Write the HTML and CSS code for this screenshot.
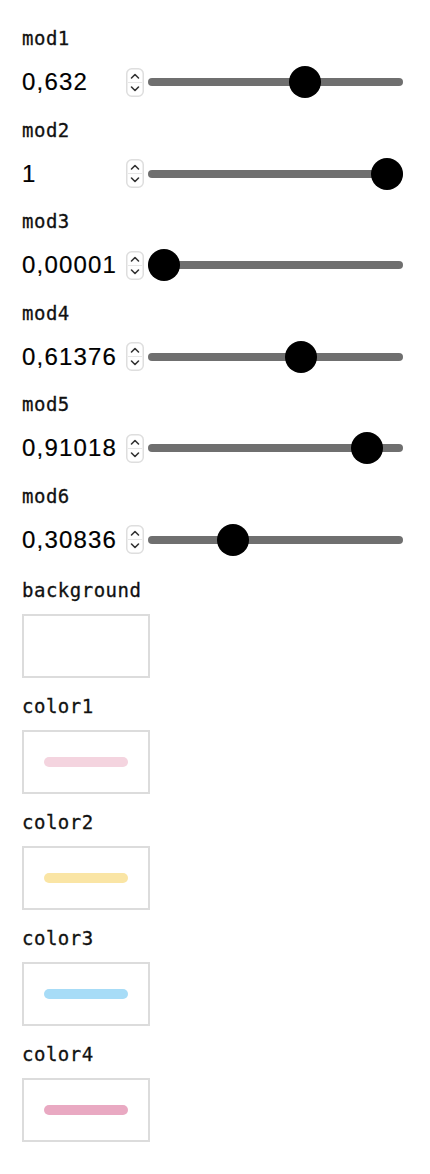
FILE: index.html
```html
<!DOCTYPE html>
<html>
<head>
<meta charset="utf-8">
<link rel="stylesheet" href="styles.css">
</head>
<body>
<div class="panel">
  <div class="sliders">
    <div class="group">
      <label class="lbl">mod1</label>
      <div class="row">
        <div class="num"><span class="val">0,632</span><svg class="spin" viewBox="0 0 18 29" width="18" height="29"><rect x="0.75" y="0.75" width="16.5" height="27.5" rx="5" fill="#fff" stroke="#dedede" stroke-width="1.5"/><line x1="2" y1="14.5" x2="16" y2="14.5" stroke="#e6e6e6" stroke-width="1"/><path d="M5.5 10 L9 6.5 L12.5 10" fill="none" stroke="#333" stroke-width="1.6" stroke-linecap="round" stroke-linejoin="round"/><path d="M5.5 19 L9 22.5 L12.5 19" fill="none" stroke="#333" stroke-width="1.6" stroke-linecap="round" stroke-linejoin="round"/></svg></div>
        <input class="range" type="range" min="0" max="1" step="0.00001" value="0.632">
      </div>
    </div>
    <div class="group">
      <label class="lbl">mod2</label>
      <div class="row">
        <div class="num"><span class="val">1</span><svg class="spin" viewBox="0 0 18 29" width="18" height="29"><rect x="0.75" y="0.75" width="16.5" height="27.5" rx="5" fill="#fff" stroke="#dedede" stroke-width="1.5"/><line x1="2" y1="14.5" x2="16" y2="14.5" stroke="#e6e6e6" stroke-width="1"/><path d="M5.5 10 L9 6.5 L12.5 10" fill="none" stroke="#333" stroke-width="1.6" stroke-linecap="round" stroke-linejoin="round"/><path d="M5.5 19 L9 22.5 L12.5 19" fill="none" stroke="#333" stroke-width="1.6" stroke-linecap="round" stroke-linejoin="round"/></svg></div>
        <input class="range" type="range" min="0" max="1" step="0.00001" value="1">
      </div>
    </div>
    <div class="group">
      <label class="lbl">mod3</label>
      <div class="row">
        <div class="num"><span class="val">0,00001</span><svg class="spin" viewBox="0 0 18 29" width="18" height="29"><rect x="0.75" y="0.75" width="16.5" height="27.5" rx="5" fill="#fff" stroke="#dedede" stroke-width="1.5"/><line x1="2" y1="14.5" x2="16" y2="14.5" stroke="#e6e6e6" stroke-width="1"/><path d="M5.5 10 L9 6.5 L12.5 10" fill="none" stroke="#333" stroke-width="1.6" stroke-linecap="round" stroke-linejoin="round"/><path d="M5.5 19 L9 22.5 L12.5 19" fill="none" stroke="#333" stroke-width="1.6" stroke-linecap="round" stroke-linejoin="round"/></svg></div>
        <input class="range" type="range" min="0" max="1" step="0.00001" value="0.00001">
      </div>
    </div>
    <div class="group">
      <label class="lbl">mod4</label>
      <div class="row">
        <div class="num"><span class="val">0,61376</span><svg class="spin" viewBox="0 0 18 29" width="18" height="29"><rect x="0.75" y="0.75" width="16.5" height="27.5" rx="5" fill="#fff" stroke="#dedede" stroke-width="1.5"/><line x1="2" y1="14.5" x2="16" y2="14.5" stroke="#e6e6e6" stroke-width="1"/><path d="M5.5 10 L9 6.5 L12.5 10" fill="none" stroke="#333" stroke-width="1.6" stroke-linecap="round" stroke-linejoin="round"/><path d="M5.5 19 L9 22.5 L12.5 19" fill="none" stroke="#333" stroke-width="1.6" stroke-linecap="round" stroke-linejoin="round"/></svg></div>
        <input class="range" type="range" min="0" max="1" step="0.00001" value="0.61376">
      </div>
    </div>
    <div class="group">
      <label class="lbl">mod5</label>
      <div class="row">
        <div class="num"><span class="val">0,91018</span><svg class="spin" viewBox="0 0 18 29" width="18" height="29"><rect x="0.75" y="0.75" width="16.5" height="27.5" rx="5" fill="#fff" stroke="#dedede" stroke-width="1.5"/><line x1="2" y1="14.5" x2="16" y2="14.5" stroke="#e6e6e6" stroke-width="1"/><path d="M5.5 10 L9 6.5 L12.5 10" fill="none" stroke="#333" stroke-width="1.6" stroke-linecap="round" stroke-linejoin="round"/><path d="M5.5 19 L9 22.5 L12.5 19" fill="none" stroke="#333" stroke-width="1.6" stroke-linecap="round" stroke-linejoin="round"/></svg></div>
        <input class="range" type="range" min="0" max="1" step="0.00001" value="0.91018">
      </div>
    </div>
    <div class="group">
      <label class="lbl">mod6</label>
      <div class="row">
        <div class="num"><span class="val">0,30836</span><svg class="spin" viewBox="0 0 18 29" width="18" height="29"><rect x="0.75" y="0.75" width="16.5" height="27.5" rx="5" fill="#fff" stroke="#dedede" stroke-width="1.5"/><line x1="2" y1="14.5" x2="16" y2="14.5" stroke="#e6e6e6" stroke-width="1"/><path d="M5.5 10 L9 6.5 L12.5 10" fill="none" stroke="#333" stroke-width="1.6" stroke-linecap="round" stroke-linejoin="round"/><path d="M5.5 19 L9 22.5 L12.5 19" fill="none" stroke="#333" stroke-width="1.6" stroke-linecap="round" stroke-linejoin="round"/></svg></div>
        <input class="range" type="range" min="0" max="1" step="0.00001" value="0.30836">
      </div>
    </div>
  </div>
  <div class="colors">
    <div class="cgroup">
      <label class="lbl">background</label>
      <div class="swatch"><span class="bar c-bg"></span></div>
    </div>
    <div class="cgroup">
      <label class="lbl">color1</label>
      <div class="swatch"><span class="bar c-1"></span></div>
    </div>
    <div class="cgroup">
      <label class="lbl">color2</label>
      <div class="swatch"><span class="bar c-2"></span></div>
    </div>
    <div class="cgroup">
      <label class="lbl">color3</label>
      <div class="swatch"><span class="bar c-3"></span></div>
    </div>
    <div class="cgroup">
      <label class="lbl">color4</label>
      <div class="swatch"><span class="bar c-4"></span></div>
    </div>
  </div>
</div>
</body>
</html>
```

FILE: styles.css
```css
html, body {
  margin: 0;
  padding: 0;
  background: #fff;
}

.panel {
  padding: 20px 0 0 22px;
  display: flex;
  flex-direction: column;
}

.sliders {
  display: flex;
  flex-direction: column;
}

.group {
  display: flex;
  flex-direction: column;
  margin-bottom: 3.6px;
}

.lbl {
  display: block;
  font-family: "DejaVu Sans Mono", monospace;
  font-size: 19px;
  letter-spacing: 0.5px;
  line-height: 36px;
  height: 36px;
  color: #111;
  -webkit-text-stroke: 0.3px #111;
}

.row {
  height: 52px;
  display: flex;
  align-items: center;
}

.num {
  width: 122px;
  height: 32px;
  display: flex;
  align-items: center;
  justify-content: space-between;
  margin-right: 4px;
}

.val {
  font-family: "Liberation Sans", Arial, sans-serif;
  font-size: 24px;
  letter-spacing: 1.2px;
  color: #000;
  line-height: 32px;
  -webkit-text-stroke: 0.2px #000;
}

.spin {
  display: block;
  flex: none;
}

.range {
  -webkit-appearance: none;
  appearance: none;
  width: 255px;
  height: 32px;
  margin: 0;
  padding: 0;
  background: transparent;
}

.range::-webkit-slider-runnable-track {
  height: 8px;
  border-radius: 4px;
  background: #6f6f6f;
}

.range::-webkit-slider-thumb {
  -webkit-appearance: none;
  appearance: none;
  width: 32px;
  height: 32px;
  border-radius: 50%;
  background: #000;
  border: none;
  margin-top: -12px;
}

.colors {
  display: flex;
  flex-direction: column;
  padding-top: 2px;
}

.cgroup {
  display: flex;
  flex-direction: column;
  margin-bottom: 10px;
}

.swatch {
  margin-top: 6px;
  width: 128px;
  height: 64px;
  box-sizing: border-box;
  border: 2px solid #dcdcdc;
  background: #fff;
  display: flex;
  align-items: center;
  justify-content: center;
}

.bar {
  display: block;
  width: 84px;
  height: 10px;
  border-radius: 5px;
}

.c-bg { background: #ffffff; }
.c-1 { background: #f4d4df; }
.c-2 { background: #fae5a5; }
.c-3 { background: #a7dcf7; }
.c-4 { background: #e9a9c2; }
```
